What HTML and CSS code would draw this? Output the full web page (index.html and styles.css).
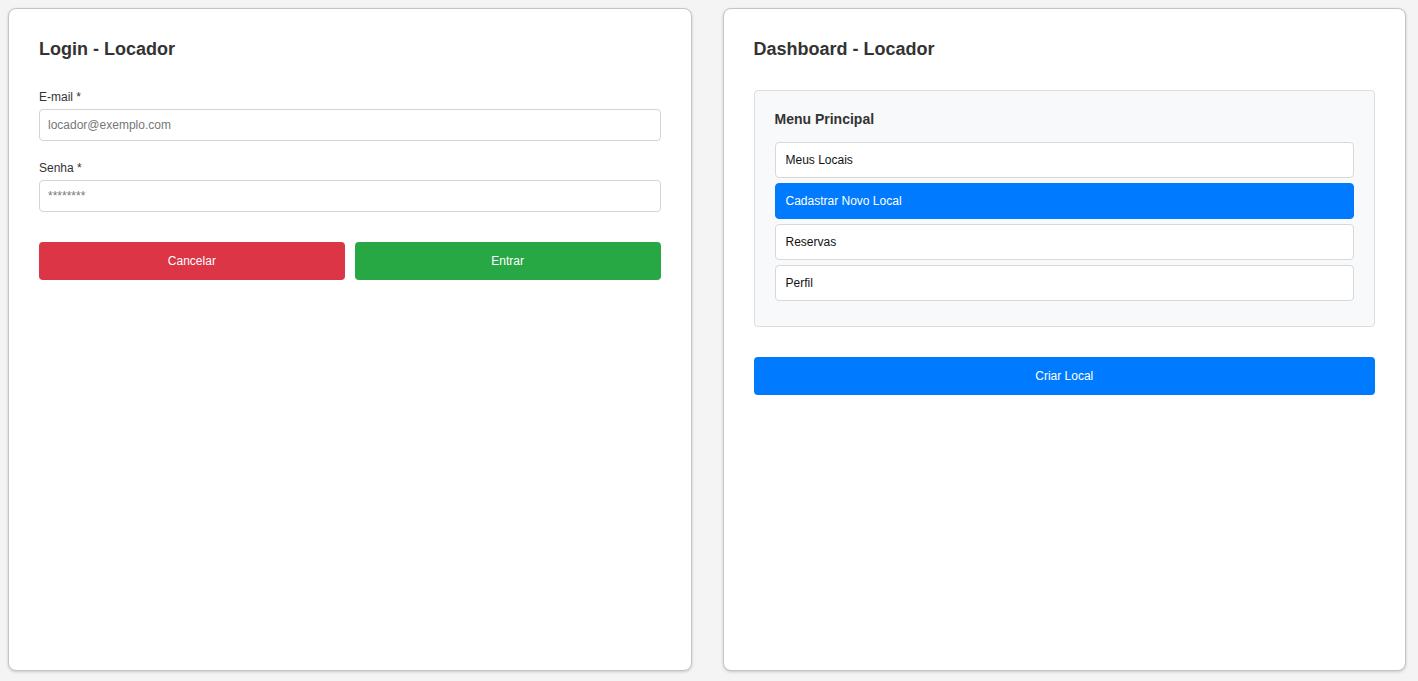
FILE: index.html
```html
<!DOCTYPE html>
<html lang="pt">
<head>
<meta charset="utf-8">
<title>Locador</title>
<link rel="stylesheet" href="styles.css">
</head>
<body>
<div class="screens">
  <section class="panel">
    <h2 class="title">Login - Locador</h2>
    <div class="field">
      <label class="label">E-mail *</label>
      <input class="input" type="text" placeholder="locador@exemplo.com">
    </div>
    <div class="field">
      <label class="label">Senha *</label>
      <input class="input" type="text" placeholder="********">
    </div>
    <div class="actions">
      <button class="btn btn-red">Cancelar</button>
      <button class="btn btn-green">Entrar</button>
    </div>
  </section>
  <section class="panel">
    <h2 class="title">Dashboard - Locador</h2>
    <div class="menu">
      <h3 class="menu-title">Menu Principal</h3>
      <div class="menu-item">Meus Locais</div>
      <div class="menu-item active">Cadastrar Novo Local</div>
      <div class="menu-item">Reservas</div>
      <div class="menu-item">Perfil</div>
    </div>
    <button class="btn btn-blue btn-full">Criar Local</button>
  </section>
</div>
</body>
</html>
```
FILE: styles.css
```css
* { box-sizing: border-box; }
html, body { margin: 0; padding: 0; }
body {
  background: #f4f4f4;
  font-family: "Liberation Sans", Arial, sans-serif;
  color: #333;
}
.screens {
  display: flex;
  gap: 31px;
  padding: 8px 12px 8px 8px;
}
.panel {
  flex: 1;
  height: 663px;
  background: #fff;
  border: 1px solid #c4c4c4;
  border-radius: 8px;
  box-shadow: 0 1px 3px rgba(0,0,0,0.18);
  padding: 30px;
}
.title {
  margin: 0 0 31px;
  font-size: 18px;
  line-height: 20px;
  font-weight: bold;
  color: #333;
}
.field { margin-bottom: 20px; }
.label {
  display: block;
  font-size: 12px;
  line-height: 14px;
  margin-bottom: 5px;
  color: #333;
}
.input {
  display: block;
  width: 100%;
  height: 32px;
  border: 1px solid #d4d4d4;
  border-radius: 4px;
  padding: 0 8px;
  font-family: inherit;
  font-size: 12px;
  color: #333;
}
.input::placeholder { color: #777; }
.actions {
  display: flex;
  gap: 10px;
  margin-top: 30px;
}
.btn {
  flex: 1;
  height: 38px;
  border: none;
  border-radius: 4px;
  color: #fff;
  font-family: inherit;
  font-size: 12px;
}
.btn-red { background: #dc3545; }
.btn-green { background: #28a745; }
.btn-blue { background: #007bff; }
.btn-full { display: block; width: 100%; margin-top: 30px; }
.menu {
  margin-top: 1px;
  background: #f8f9fa;
  border: 1px solid #dedede;
  border-radius: 4px;
  padding: 20px;
}
.menu-title {
  margin: 0 0 15px;
  font-size: 14px;
  line-height: 16px;
  font-weight: bold;
  color: #333;
}
.menu-item {
  height: 36px;
  background: #fff;
  border: 1px solid #d8d8d8;
  border-radius: 4px;
  padding: 0 10px;
  display: flex;
  align-items: center;
  font-size: 12px;
  color: #111;
  margin-bottom: 5px;
}
.menu-item.active {
  background: #007bff;
  border-color: #007bff;
  color: #fff;
}
```
